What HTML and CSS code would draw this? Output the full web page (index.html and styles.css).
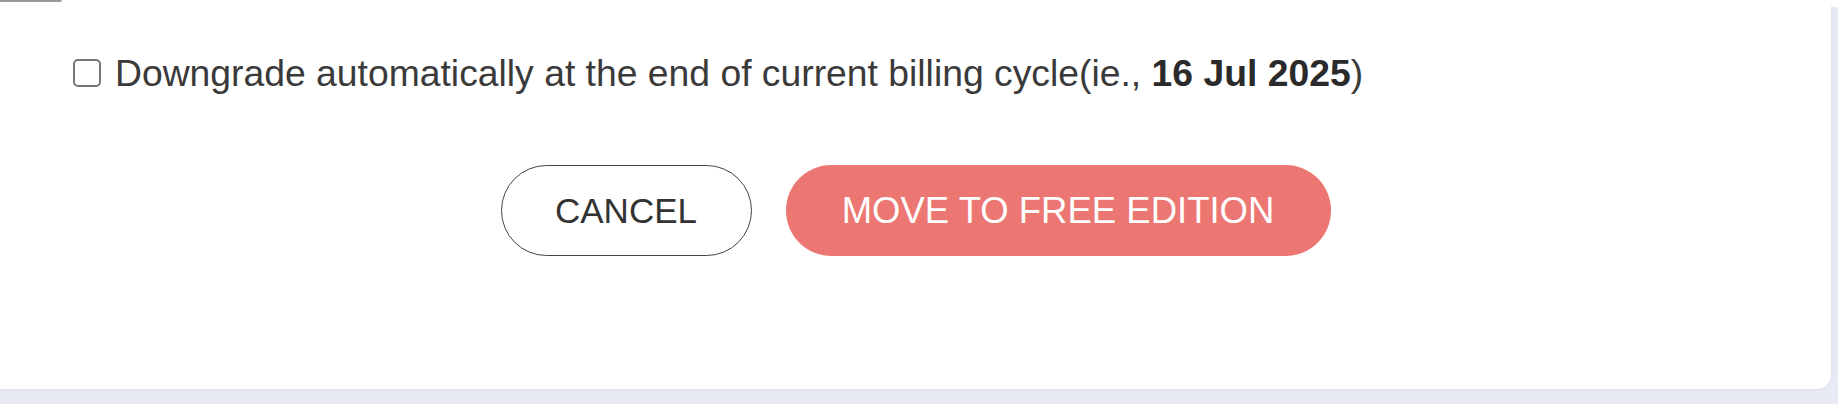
FILE: index.html
```html
<!DOCTYPE html>
<html lang="en">
<head>
  <meta charset="UTF-8">
  <meta name="viewport" content="width=device-width, initial-scale=1.0">
  <title>Downgrade plan</title>
  <link rel="stylesheet" href="styles.css">
</head>
<body>
  <div class="card">
    <div class="stub"></div>
    <label class="option">
      <input type="checkbox" id="autoDowngrade" />
      <span>Downgrade automatically at the end of current billing cycle(ie., <b>16 Jul 2025</b>)</span>
    </label>
    <div class="actions">
      <button type="button" class="btn btn-cancel">CANCEL</button>
      <button type="button" class="btn btn-primary">MOVE TO FREE EDITION</button>
    </div>
  </div>
</body>
</html>
```

FILE: styles.css
```css
body {
  font-family: "Liberation Sans", Arial, sans-serif;
  background: linear-gradient(to bottom, #fff 7px, #e8eaf3 7px);
  margin: 0;
  height: 404px;
  overflow: hidden;
}
.card {
  background: #fff;
  width: 1831px;
  height: 389px;
  border-radius: 0 0 14px 0;
  box-shadow: 0 1px 3px rgba(60, 70, 120, 0.08);
}
.stub {
  width: 62px;
  height: 2px;
  background: #9a9a9a;
  border-radius: 0 0 6px 0;
}
.option {
  display: flex;
  align-items: center;
  gap: 14px;
  margin: 51px 0 0 73px;
  color: #3a3a3a;
  font-size: 37.3px;
  line-height: 40px;
  cursor: pointer;
}
.option b {
  color: #2a2a2a;
}
.option input {
  appearance: none;
  -webkit-appearance: none;
  width: 28px;
  height: 28px;
  margin: 0;
  border: 2px solid #777;
  border-radius: 5px;
  background: #fff;
  flex-shrink: 0;
}
.actions {
  display: flex;
  justify-content: center;
  gap: 34px;
  margin-top: 72px;
}
.btn {
  height: 91px;
  border-radius: 46px;
  font-family: "Liberation Sans", Arial, sans-serif;
  font-size: 35px;
  cursor: pointer;
}
.btn-cancel {
  width: 251px;
  background: #fff;
  color: #333;
  border: 1.5px solid #444;
}
.btn-primary {
  width: 545px;
  font-size: 36.5px;
  background-color: #ec7672;
  color: #fff;
  border: none;
}
.btn-primary:hover {
  background-color: #e5635f;
}
```
